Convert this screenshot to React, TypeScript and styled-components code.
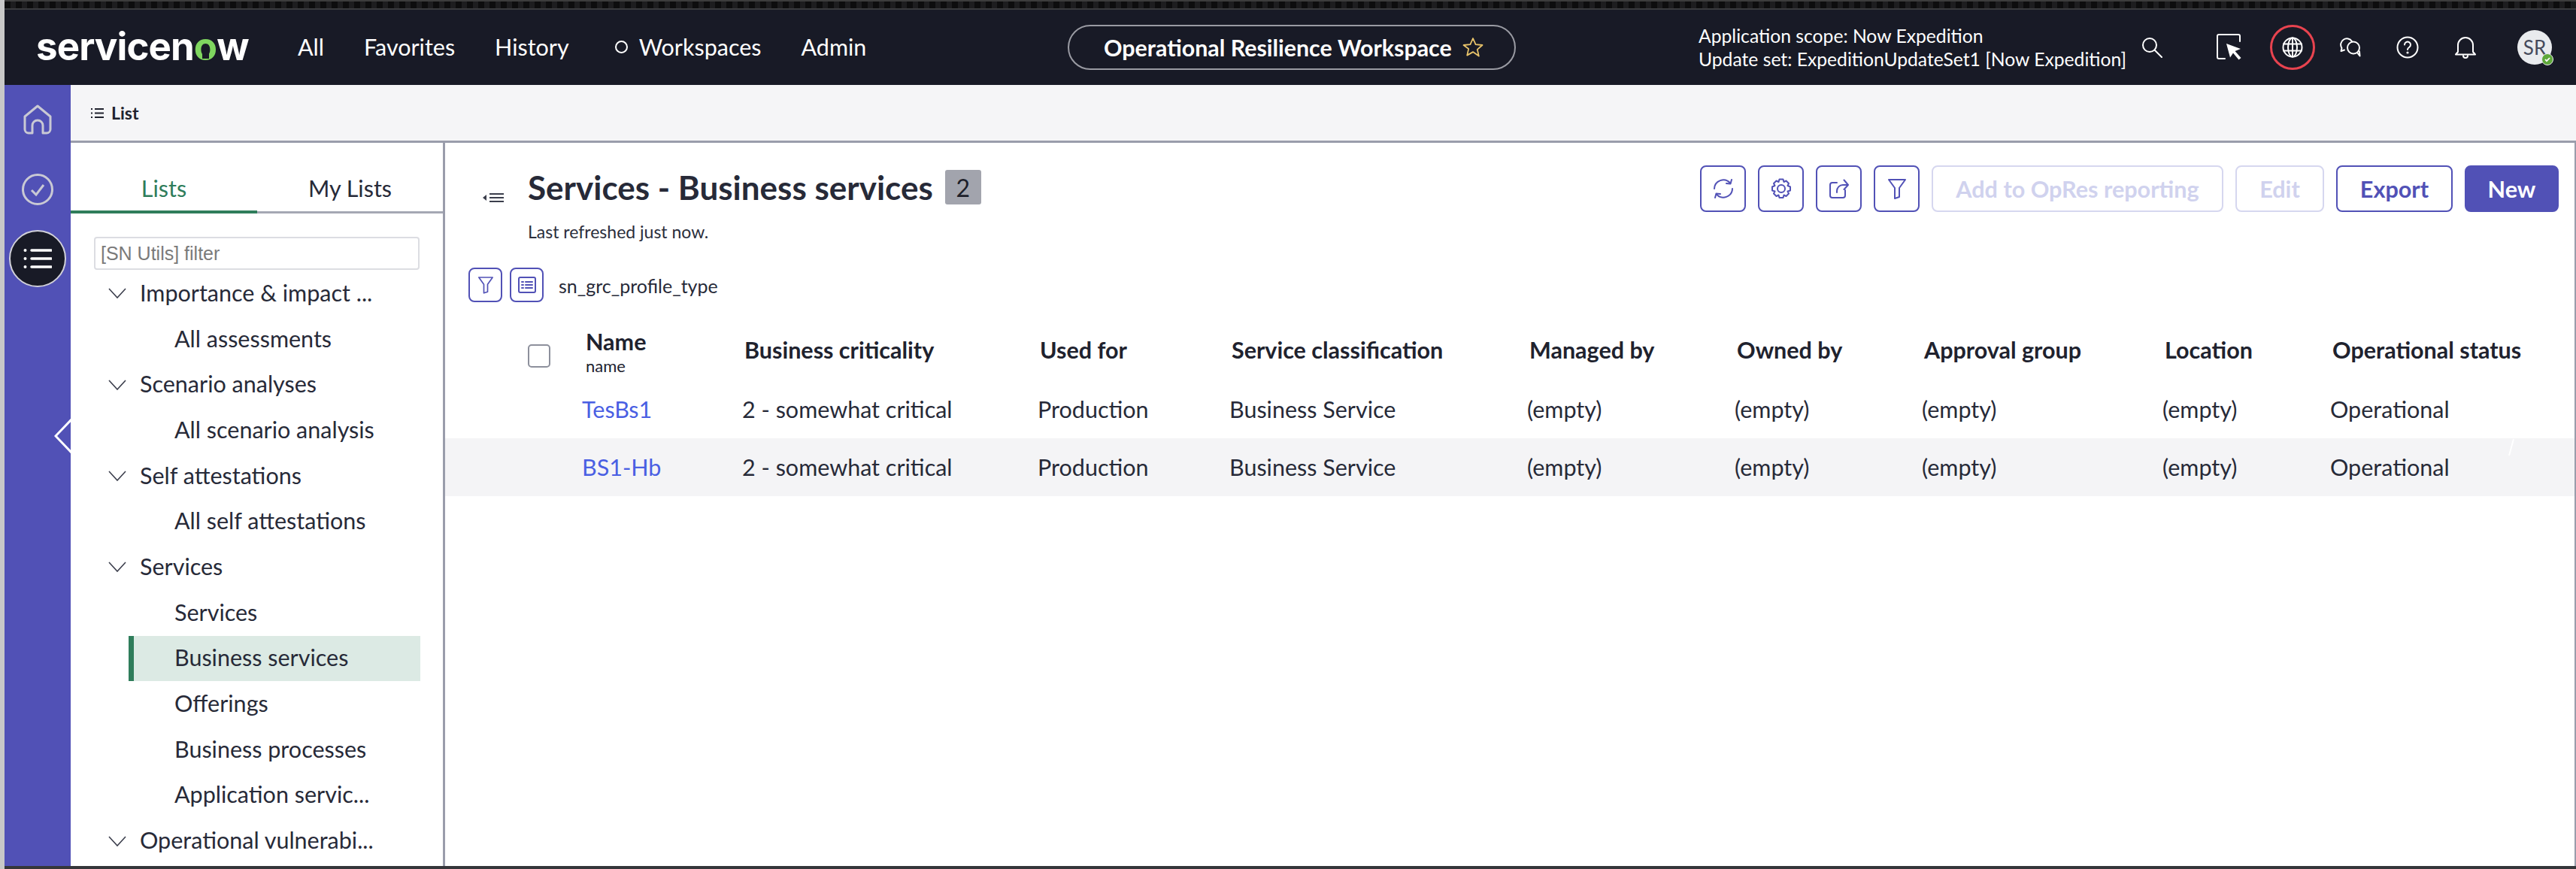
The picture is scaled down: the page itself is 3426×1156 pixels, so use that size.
import React from "react";
import styled, { createGlobalStyle } from "styled-components";

const Global = createGlobalStyle`
  html, body { margin: 0; padding: 0; background: #fff; }
  * { box-sizing: border-box; }
  #root { width: 3426px; height: 1156px; overflow: hidden; }
`;

const Page = styled.div`
  width: 3426px;
  height: 1156px;
  display: flex;
  flex-direction: column;
  background: #fff;
  padding-left: 6px;
  position: relative;
  overflow: hidden;
  font-family: Lato, "Liberation Sans", sans-serif;
  color: #272a38;
  &::before {
    content: "";
    position: absolute;
    left: 0; top: 0; bottom: 0;
    width: 6px;
    background: #c8c8c8;
  }
`;

const Strip = styled.div`
  height: 13px;
  flex: none;
  border-top: 2px solid #3c3c3c;
  border-bottom: 2px solid #3a3b3e;
  background: repeating-linear-gradient(90deg, #0d0d0e 0 8px, #1d1d1f 8px 15px);
`;

const Nav = styled.header`
  height: 100px;
  flex: none;
  display: flex;
  align-items: center;
  background: #181a26;
  color: #fff;
  padding-left: 42px;
`;

const Logo = styled.div`
  width: 285px;
  font-family: Inter, sans-serif;
  font-weight: 700;
  font-size: 51px;
  letter-spacing: -0.9px;
  line-height: 1;
  color: #fff;
  white-space: nowrap;
  margin-top: -4px;
`;

const LogoO = styled.span`
  color: #7fd65f;
  position: relative;
  display: inline-block;
  &::after {
    content: "";
    position: absolute;
    left: 50%;
    bottom: 9px;
    width: 9px;
    height: 7px;
    margin-left: -4.5px;
    background: #181a26;
  }
`;

const NavLinks = styled.nav`
  display: flex;
  align-items: center;
  gap: 53px;
  width: 757px;
  margin-left: 63px;
  font-size: 30.5px;
  margin-top: -2px;
`;

const NavLink = styled.span`
  display: flex;
  align-items: center;
  white-space: nowrap;
`;

const Ring = styled.span`
  width: 17px;
  height: 17px;
  border: 2px solid #fff;
  border-radius: 50%;
  margin-right: 15px;
  margin-left: 8px;
`;

const WorkspacePill = styled.div`
  width: 596px;
  height: 60px;
  margin-left: 267px;
  border: 2px solid #9a9ba3;
  border-radius: 30px;
  display: flex;
  align-items: center;
  padding-left: 46px;
  gap: 14px;
  font-weight: 700;
  font-size: 30.4px;
  white-space: nowrap;
`;

const Scope = styled.div`
  margin-left: 243px;
  width: 589px;
  font-size: 24.7px;
  line-height: 31px;
  white-space: nowrap;
`;

const IconBar = styled.div`
  display: grid;
  grid-template-columns: 99px 72px 92px 76px 78px 83px 46px;
  align-items: center;
  justify-items: start;
`;

const GlobeRing = styled.span`
  width: 60px;
  height: 60px;
  border: 3px solid #e8434f;
  border-radius: 50%;
  display: flex;
  align-items: center;
  justify-content: center;
`;

const Avatar = styled.div`
  width: 46px;
  height: 46px;
  border-radius: 50%;
  background: #e9ebee;
  color: #454a5c;
  font-size: 26px;
  display: flex;
  align-items: center;
  justify-content: center;
  position: relative;
`;

const Presence = styled.span`
  position: absolute;
  right: -2px;
  bottom: -1px;
  width: 16px;
  height: 16px;
  border-radius: 50%;
  background: #5ea83a;
  border: 1px solid #e9ebee;
  display: flex;
  align-items: center;
  justify-content: center;
`;

const Body = styled.div`
  flex: 1;
  min-height: 0;
  display: flex;
`;

const Rail = styled.aside`
  width: 88px;
  flex: none;
  background: #5151b6;
  display: flex;
  flex-direction: column;
  align-items: center;
  padding-top: 26px;
  position: relative;
`;

const RailButton = styled.div`
  height: 76px;
  width: 76px;
  margin-top: 33px;
  border-radius: 50%;
  background: #181a26;
  border: 2px solid #d0d0d8;
  display: flex;
  align-items: center;
  justify-content: center;
`;

const RailCheck = styled.div`
  margin-top: 52px;
  display: flex;
`;

const RailCollapse = styled.div`
  position: absolute;
  left: 66px;
  top: 444px;
  width: 22px;
  height: 46px;
  overflow: hidden;
`;

const Work = styled.div`
  flex: 1;
  min-width: 0;
  display: flex;
  flex-direction: column;
`;

const SubBar = styled.div`
  height: 77px;
  flex: none;
  background: #f5f5f7;
  border-bottom: 3px solid #9a9dab;
  display: flex;
  align-items: center;
  padding-left: 27px;
  gap: 10px;
  font-size: 23px;
  font-weight: 700;
  color: #20222e;
`;

const Columns = styled.div`
  flex: 1;
  min-height: 0;
  display: flex;
`;

const Sidebar = styled.section`
  width: 498px;
  flex: none;
  border-right: 3px solid #9a9dab;
  background: #fff;
  overflow: hidden;
`;

const Tabs = styled.div`
  display: grid;
  grid-template-columns: 248px 247px;
  height: 94px;
  border-bottom: 3px solid #a5a8b4;
  padding-top: 31px;
`;

const Tab = styled.div<{ $active?: boolean }>`
  font-size: 30.5px;
  line-height: 58px;
  height: 63px;
  text-align: center;
  color: ${(p) => (p.$active ? "#2f7d5b" : "#272a38")};
  border-bottom: ${(p) => (p.$active ? "4px solid #2f7d5b" : "0")};
`;

const FilterInput = styled.input`
  display: block;
  width: 433px;
  height: 44px;
  margin: 31px 0 0 31px;
  border: 2px solid #dcdde2;
  border-radius: 4px;
  padding: 0 7px;
  font-family: "Liberation Sans", sans-serif;
  font-size: 25px;
  background: #fff;
  &::placeholder { color: #7a7a7a; opacity: 1; }
`;

const Tree = styled.ul`
  list-style: none;
  margin: 1px 0 0;
  padding: 0;
`;

const TreeRow = styled.li<{ $child?: boolean; $selected?: boolean }>`
  height: 60.7px;
  display: flex;
  align-items: center;
  margin-left: 77px;
  width: 388px;
  padding-bottom: 3px;
  padding-left: ${(p) => (p.$child ? "61px" : "0")};
  font-size: 30.5px;
  white-space: nowrap;
  ${(p) =>
    p.$selected
      ? "background: #dceae4; border-left: 7px solid #2f7d5b; padding-left: 54px;"
      : ""}
`;

const Chevron = styled.svg`
  width: 24px;
  height: 14px;
  margin-left: -27px;
  margin-right: 18px;
  margin-top: 3px;
  flex: none;
`;

const Main = styled.main`
  flex: 1;
  min-width: 0;
  display: flex;
  flex-direction: column;
  position: relative;
  background: #fff;
  border-right: 2px solid #9a9dab;
`;

const MainHead = styled.div`
  display: flex;
  justify-content: space-between;
  align-items: flex-start;
  padding: 30px 21px 0 50px;
`;

const TitleBlock = styled.div`
  display: flex;
  flex-direction: column;
  padding-top: 6px;
`;

const TitleRow = styled.div`
  display: flex;
  align-items: center;
`;

const CollapseIcon = styled.svg`
  width: 28px;
  height: 14px;
  margin-top: 27px;
  flex: none;
`;

const Title = styled.h1`
  margin: 0 16px 0 32px;
  font-size: 44px;
  line-height: 46px;
  font-weight: 700;
  white-space: nowrap;
  color: #272a38;
`;

const Count = styled.span`
  width: 48px;
  height: 46px;
  border-radius: 3px;
  background: #a2a4ad;
  color: #1d1f2a;
  font-size: 32px;
  display: flex;
  align-items: center;
  justify-content: center;
`;

const Refreshed = styled.div`
  margin: 22px 0 0 60px;
  font-size: 23px;
  line-height: 28px;
  color: #2b2e3c;
`;

const Actions = styled.div`
  display: flex;
  gap: 16px;
`;

const IconButton = styled.button<{ $small?: boolean }>`
  width: ${(p) => (p.$small ? "45px" : "61px")};
  height: ${(p) => (p.$small ? "46px" : "62px")};
  padding: 0;
  background: #fff;
  border: 2px solid #5151b6;
  border-radius: 8px;
  display: flex;
  align-items: center;
  justify-content: center;
`;

const TextButton = styled.button<{ $kind: "disabled" | "outline" | "primary"; $w: number }>`
  width: ${(p) => p.$w}px;
  height: 62px;
  border-radius: 8px;
  font-family: Lato, sans-serif;
  font-weight: 700;
  font-size: 30.6px;
  padding: 0;
  border: 2px solid ${(p) => (p.$kind === "disabled" ? "#d6d7ef" : "#5151b6")};
  background: ${(p) => (p.$kind === "primary" ? "#5151b6" : "#fff")};
  color: ${(p) => (p.$kind === "disabled" ? "#d0d2ee" : p.$kind === "primary" ? "#fff" : "#5151b6")};
`;

const FilterRow = styled.div`
  display: flex;
  align-items: center;
  margin: 34px 0 0 31px;
  gap: 10px;
`;

const FilterLabel = styled.span`
  margin-left: 10px;
  margin-top: 2px;
  font-size: 25px;
  color: #272a38;
`;

const COLS = "182px 213px 393px 255px 396px 276px 249px 320px 223px 1fr";

const TableHead = styled.div`
  display: grid;
  grid-template-columns: ${COLS};
  margin-top: 28px;
  height: 76px;
  align-items: start;
`;

const HeadCheck = styled.span`
  display: block;
  width: 30px;
  height: 31px;
  margin: 28px 0 0 110px;
  border: 2px solid #8d909c;
  border-radius: 5px;
  background: #fff;
`;

const HeadCell = styled.div<{ $first?: boolean }>`
  padding-left: ${(p) => (p.$first ? "5px" : "3px")};
  padding-top: ${(p) => (p.$first ? "6px" : "17px")};
  font-size: 30.5px;
  line-height: 36px;
  font-weight: 700;
  white-space: nowrap;
  color: #20222e;
`;

const HeadSub = styled.div`
  font-size: 22px;
  font-weight: 400;
  line-height: 24px;
  margin-top: 3px;
`;

const TableRow = styled.div<{ $alt?: boolean }>`
  display: grid;
  grid-template-columns: ${COLS};
  height: 77px;
  padding-bottom: 2px;
  align-items: center;
  background: ${(p) => (p.$alt ? "#f4f4f6" : "#fff")};
  font-size: 30.5px;
  white-space: nowrap;
  color: #272a38;
`;

const RowLink = styled.a`
  color: #4a5fe3;
`;

const Ghost = styled.svg`
  position: absolute;
  right: 80px;
  top: 393px;
`;

const Footer = styled.div`
  height: 4px;
  flex: none;
  background: #35363a;
  margin-left: -6px;
`;

const S = { fill: "none", stroke: "#fff", strokeWidth: 2, strokeLinecap: "round" as const, strokeLinejoin: "round" as const };
const P = { ...S, stroke: "#5151b6" };

const tree: [string, boolean?, boolean?][] = [
  ["Importance & impact ..."],
  ["All assessments", true],
  ["Scenario analyses"],
  ["All scenario analysis", true],
  ["Self attestations"],
  ["All self attestations", true],
  ["Services"],
  ["Services", true],
  ["Business services", true, true],
  ["Offerings", true],
  ["Business processes", true],
  ["Application servic...", true],
  ["Operational vulnerabi..."],
];

const headers = ["Business criticality", "Used for", "Service classification", "Managed by", "Owned by", "Approval group", "Location", "Operational status"];
const rows = [
  { name: "TesBs1", alt: false },
  { name: "BS1-Hb", alt: true },
];
const cells = ["2 - somewhat critical", "Production", "Business Service", "(empty)", "(empty)", "(empty)", "(empty)", "Operational"];

export default function App() {
  return (
    <Page>
      <Global />
      <Strip />
      <Nav>
        <Logo>servicen<LogoO>o</LogoO>w</Logo>
        <NavLinks>
          <NavLink>All</NavLink>
          <NavLink>Favorites</NavLink>
          <NavLink>History</NavLink>
          <NavLink><Ring />Workspaces</NavLink>
          <NavLink>Admin</NavLink>
        </NavLinks>
        <WorkspacePill>
          Operational Resilience Workspace
          <svg width="28" height="28" viewBox="0 0 28 28"><path d="M14 2l3.6 8.2 8.9.8-6.7 5.9 2 8.7L14 20.1 6.2 24.6l2-8.7L1.5 11l8.9-.8z" fill="none" stroke="#e9c46a" strokeWidth="1.8" strokeLinejoin="round" /></svg>
        </WorkspacePill>
        <Scope>
          Application scope: Now Expedition<br />
          Update set: ExpeditionUpdateSet1 [Now Expedition]
        </Scope>
        <IconBar>
          <svg width="28" height="28" viewBox="0 0 28 28"><circle cx="11" cy="11" r="9" {...S} /><path d="M17.5 17.5L27 27" {...S} /></svg>
          <svg width="36" height="36" viewBox="0 0 36 36"><path d="M12 33H4a2 2 0 0 1-2-2V3a2 2 0 0 1 2-2h26a2 2 0 0 1 2 2v7" {...S} /><path d="M14 13l19 7-7.5 3 8 9-3 2.5-7.5-9-4 6z" fill="#fff" /></svg>
          <GlobeRing>
            <svg width="28" height="28" viewBox="0 0 28 28"><circle cx="14" cy="14" r="12.5" {...S} /><ellipse cx="14" cy="14" rx="6" ry="12.5" {...S} /><path d="M14 1.5v25M2 9.5h24M2 18.5h24" {...S} /></svg>
          </GlobeRing>
          <svg width="30" height="26" viewBox="0 0 30 26"><path d="M17 5A8 8 0 1 0 3.500 14L2.500 18l4.500-1.500" {...S} /><circle cx="19" cy="13.500" r="8" {...S} /><path d="M24 20l3.500 4.500-.5-6" {...S} /></svg>
          <svg width="30" height="30" viewBox="0 0 30 30"><circle cx="15" cy="15" r="13.500" {...S} /><path d="M11 11.500a4 4 0 1 1 6 3.500c-1.400.8-2 1.500-2 3" {...S} /><circle cx="15" cy="22" r=".6" {...S} /></svg>
          <svg width="28" height="30" viewBox="0 0 28 30"><path d="M4 21V12a10 10 0 0 1 20 0v9l3 3.500H1z" {...S} /><path d="M11 26a3 3 0 0 0 6 0" {...S} /></svg>
          <Avatar>
            SR
            <Presence><svg width="10" height="10" viewBox="0 0 10 10"><path d="M2 5l2 2.200L8 3" fill="none" stroke="#fff" strokeWidth="1.800" /></svg></Presence>
          </Avatar>
        </IconBar>
      </Nav>
      <Body>
        <Rail>
          <svg width="38" height="40" viewBox="0 0 38 40"><path d="M12 38H7a5 5 0 0 1-5-5V16L19 2l17 14v17a5 5 0 0 1-5 5h-5V28a7 7 0 0 0-14 0z" fill="none" stroke="#c9c9d4" strokeWidth="3" strokeLinejoin="round" /></svg>
          <RailCheck>
            <svg width="42" height="42" viewBox="0 0 42 42"><circle cx="21" cy="21" r="19.500" fill="none" stroke="#c9c9d4" strokeWidth="3" /><path d="M13 22l6 6 10-13" fill="none" stroke="#c9c9d4" strokeWidth="3" /></svg>
          </RailCheck>
          <RailButton>
            <svg width="38" height="28" viewBox="0 0 38 28"><circle cx="2.500" cy="3" r="2" fill="#fff" /><circle cx="2.500" cy="14" r="2" fill="#fff" /><circle cx="2.500" cy="25" r="2" fill="#fff" /><path d="M11 3h26M11 14h26M11 25h26" stroke="#fff" strokeWidth="3.500" strokeLinecap="round" /></svg>
          </RailButton>
          <RailCollapse>
            <svg width="24" height="46" viewBox="0 0 24 46"><path d="M23 1L2 23l21 22" fill="none" stroke="#fff" strokeWidth="3" /></svg>
          </RailCollapse>
        </Rail>
        <Work>
          <SubBar>
            <svg width="17" height="15" viewBox="0 0 17 15"><path d="M0 2h2M5 2h12M0 7.500h2M5 7.500h12M0 13h2M5 13h12" stroke="#20222e" strokeWidth="2" /></svg>
            List
          </SubBar>
          <Columns>
            <Sidebar>
              <Tabs>
                <Tab $active>Lists</Tab>
                <Tab>My Lists</Tab>
              </Tabs>
              <FilterInput placeholder="[SN Utils] filter" readOnly />
              <Tree>
                {tree.map(([label, child, selected], i) => (
                  <TreeRow key={i} $child={child} $selected={selected}>
                    {!child && (
                      <Chevron viewBox="0 0 24 14"><path d="M1 1l11 12L23 1" fill="none" stroke="#3b3e4c" strokeWidth="1.600" /></Chevron>
                    )}
                    {label}
                  </TreeRow>
                ))}
              </Tree>
            </Sidebar>
            <Main>
              <MainHead>
                <TitleBlock>
                  <TitleRow>
                    <CollapseIcon viewBox="0 0 28 14"><path d="M9 2h19M9 7h19M9 12h19" stroke="#3b3e4c" strokeWidth="2" /><path d="M5 3L0 7l5 4z" fill="#3b3e4c" /></CollapseIcon>
                    <Title>Services - Business services</Title>
                    <Count>2</Count>
                  </TitleRow>
                  <Refreshed>Last refreshed just now.</Refreshed>
                </TitleBlock>
                <Actions>
                  <IconButton>
                    <svg width="28" height="28" viewBox="0 0 28 28"><path d="M2 14A12 12 0 0 1 23 6.500M26 14A12 12 0 0 1 5 21.500" {...P} /><path d="M25 2l-1.500 5.500-5.500-.5M3 26l1.500-5.500 5.500.5" {...P} /></svg>
                  </IconButton>
                  <IconButton>
                    <svg width="28" height="28" viewBox="0 0 28 28"><circle cx="14" cy="14" r="5" {...P} /><path d="M11.500 1.500h5l1 3.500 3-1.500 3.500 3.500-1.500 3 3.500 1.500v5l-3.500 1 1.500 3-3.500 3.500-3-1.500-1 3.500h-5l-1-3.500-3 1.500-3.500-3.500 1.500-3-3.500-1v-5l3.500-1.500-1.500-3 3.500-3.500 3 1.500z" {...P} /></svg>
                  </IconButton>
                  <IconButton>
                    <svg width="26" height="26" viewBox="0 0 26 26"><path d="M10 5H4a3 3 0 0 0-3 3v14a3 3 0 0 0 3 3h14a3 3 0 0 0 3-3v-7" {...P} /><path d="M10 18v-2a8 8 0 0 1 8-8h7M19.500 1.500L25 8l-5.500 6" {...P} /></svg>
                  </IconButton>
                  <IconButton>
                    <svg width="24" height="28" viewBox="0 0 24 28"><path d="M1 2h22l-8 11v12l-6 2V13z" {...P} /></svg>
                  </IconButton>
                  <TextButton $kind="disabled" $w={388}>Add to OpRes reporting</TextButton>
                  <TextButton $kind="disabled" $w={118}>Edit</TextButton>
                  <TextButton $kind="outline" $w={155}>Export</TextButton>
                  <TextButton $kind="primary" $w={125}>New</TextButton>
                </Actions>
              </MainHead>
              <FilterRow>
                <IconButton $small>
                  <svg width="20" height="24" viewBox="0 0 24 28"><path d="M1 2h22l-8 11v12l-6 2V13z" {...P} /></svg>
                </IconButton>
                <IconButton $small>
                  <svg width="24" height="22" viewBox="0 0 24 22"><rect x="1" y="1" width="22" height="20" rx="2" {...P} /><path d="M5 7h2M10 7h9M5 11h2M10 11h9M5 15h2M10 15h9" {...P} /></svg>
                </IconButton>
                <FilterLabel>sn_grc_profile_type</FilterLabel>
              </FilterRow>
              <TableHead>
                <HeadCheck />
                <HeadCell $first>Name<HeadSub>name</HeadSub></HeadCell>
                {headers.map((h) => <HeadCell key={h}>{h}</HeadCell>)}
              </TableHead>
              {rows.map((r) => (
                <TableRow key={r.name} $alt={r.alt}>
                  <span />
                  <RowLink>{r.name}</RowLink>
                  {cells.map((c, i) => <span key={i}>{c}</span>)}
                </TableRow>
              ))}
              <Ghost width="8" height="24" viewBox="0 0 8 24"><path d="M1 23L7 1" stroke="#fff" strokeWidth="2" fill="none" /></Ghost>
            </Main>
          </Columns>
        </Work>
      </Body>
      <Footer />
    </Page>
  );
}
